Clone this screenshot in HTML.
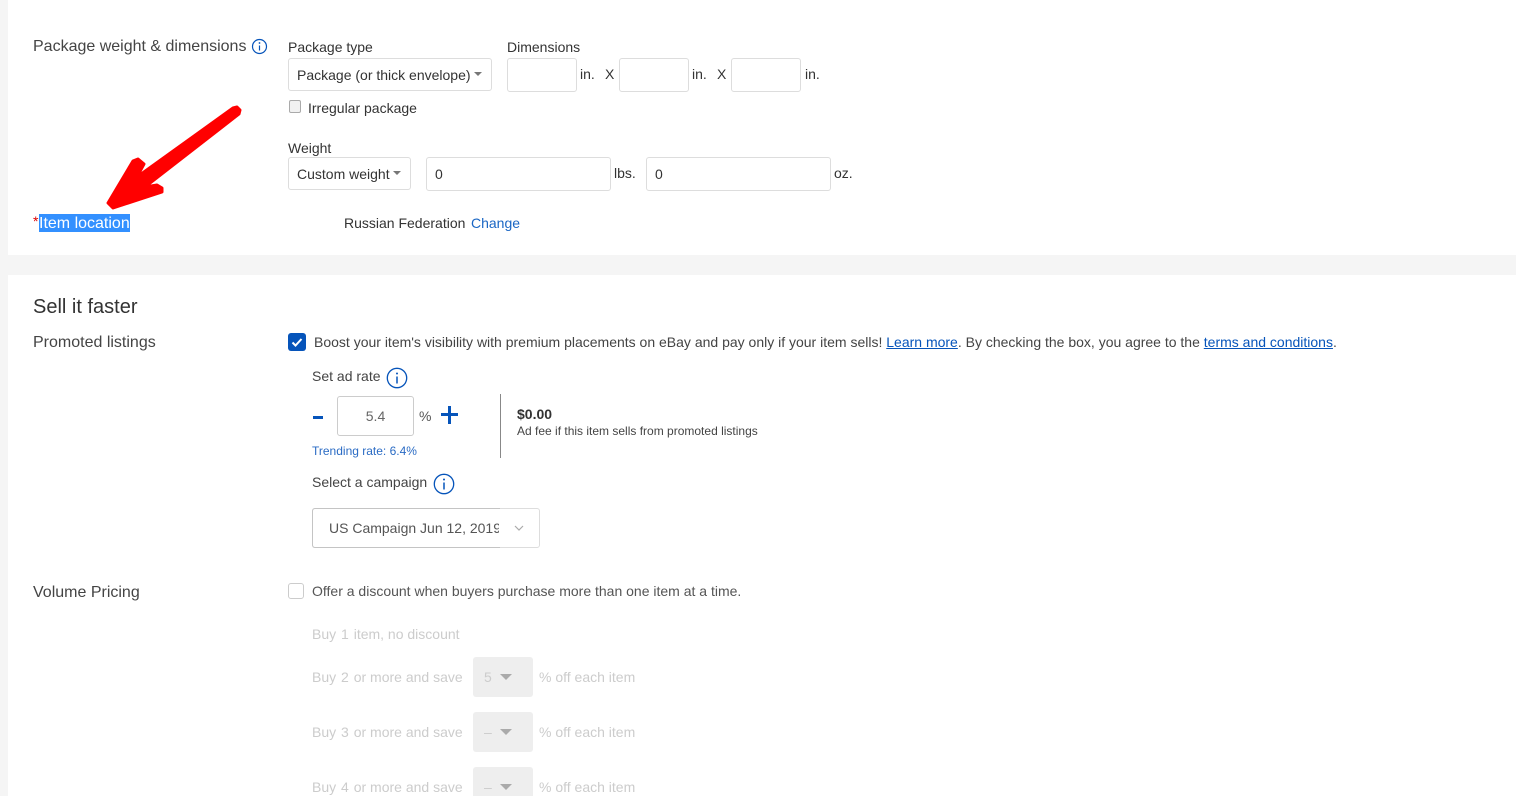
<!DOCTYPE html>
<html><head><meta charset="utf-8"><style>
html,body{margin:0;padding:0;overflow:hidden;width:1516px;height:796px}
#w{position:absolute;left:0;top:0;width:1516px;height:796px;overflow:hidden;background:#fff;font-family:"Liberation Sans",Arial,sans-serif;font-size:14px;color:#333}
.t{position:absolute;white-space:nowrap;line-height:20px}
.b{position:absolute;box-sizing:border-box;background:#fff;border:1px solid #ddd;border-radius:3px}
.g{position:absolute;background:#f5f5f5}
.h{font-size:16px;color:#444}
.d{color:#ccc}
.s{position:absolute;background:#eee;border-radius:3px;width:60px;height:40px;left:473px}
.c{position:absolute;width:0;height:0;border-left:4.5px solid transparent;border-right:4.5px solid transparent;border-top:4px solid #777}
.c2{position:absolute;width:0;height:0;border-left:6px solid transparent;border-right:6px solid transparent;border-top:6px solid #aaa}
.n{margin:0 1px}
a{color:#0654ba}
svg{position:absolute}
</style></head><body><div id="w">
<div class="g" style="left:0;top:0;width:8px;height:796px"></div>
<div class="g" style="left:0;top:255px;width:1516px;height:20px"></div>

<div class="t h" style="left:33px;top:37px">Package weight &amp; dimensions</div>
<svg style="left:251px;top:38px" width="17" height="17" viewBox="0 0 17 17"><circle cx="8.5" cy="8.5" r="7" fill="none" stroke="#0654ba" stroke-width="1.2"/><path d="M8.5 7.5v5" stroke="#0654ba" stroke-width="1.2"/><circle cx="8.5" cy="5" r=".9" fill="#0654ba"/></svg>

<div class="t" style="left:288px;top:37px">Package type</div>
<div class="b" style="left:288px;top:58px;width:204px;height:33px"></div>
<div class="t" style="left:297px;top:65px">Package (or thick envelope)</div>
<div class="c" style="left:474px;top:72px"></div>

<div class="t" style="left:507px;top:37px">Dimensions</div>
<div class="b" style="left:507px;top:58px;width:70px;height:34px"></div>
<div class="t" style="left:580px;top:64px">in.</div>
<div class="t" style="left:605px;top:64px">X</div>
<div class="b" style="left:619px;top:58px;width:70px;height:34px"></div>
<div class="t" style="left:692px;top:64px">in.</div>
<div class="t" style="left:717px;top:64px">X</div>
<div class="b" style="left:731px;top:58px;width:70px;height:34px"></div>
<div class="t" style="left:805px;top:64px">in.</div>

<div class="b" style="left:289px;top:100px;width:12px;height:13px;background:#f1f1f1;border-color:#aaa;border-radius:2px"></div>
<div class="t" style="left:308px;top:98px">Irregular package</div>

<div class="t" style="left:288px;top:138px">Weight</div>
<div class="b" style="left:288px;top:157px;width:123px;height:33px"></div>
<div class="t" style="left:297px;top:164px">Custom weight</div>
<div class="c" style="left:393px;top:171px"></div>
<div class="b" style="left:426px;top:157px;width:185px;height:34px"></div>
<div class="t" style="left:435px;top:164px">0</div>
<div class="t" style="left:614px;top:163px">lbs.</div>
<div class="b" style="left:646px;top:157px;width:185px;height:34px"></div>
<div class="t" style="left:655px;top:164px">0</div>
<div class="t" style="left:834px;top:163px">oz.</div>

<div class="t" style="left:33px;top:211px;color:#d00">*</div>
<div class="t" style="left:39px;top:214px;width:91px;height:18px;line-height:19px;background:#3390ff;color:#fff;font-size:16px">Item location</div>
<div class="t" style="left:344px;top:213px">Russian Federation</div>
<div class="t" style="left:471px;top:213px;color:#1a66c4">Change</div>

<svg style="left:0;top:0" width="300" height="230" viewBox="0 0 300 230">
<path d="M233 108L137 177L144 164L138 159L133 161L108 203L113 208L162 192L162 188L157 185L145 187L239 114L240 110L237 107Z" fill="#f00" stroke="#f00" stroke-width="3" stroke-linejoin="round"/>
</svg>

<div class="t" style="left:33px;top:296px;font-size:20px;line-height:23px;color:#333">Sell it faster</div>
<div class="t h" style="left:33px;top:333px">Promoted listings</div>

<div style="position:absolute;left:288px;top:333px;width:18px;height:18px;background:#0654ba;border-radius:3px"></div>
<svg style="left:288px;top:333px" width="18" height="18" viewBox="0 0 18 18"><path d="M4.5 9.5l3 3 6-6.5" fill="none" stroke="#fff" stroke-width="2"/></svg>
<div class="t" style="left:314px;top:332px;color:#444">Boost your item's visibility with premium placements on eBay and pay only if your item sells! <a style="text-decoration:underline">Learn more</a>. By checking the box, you agree to the <a style="text-decoration:underline">terms and conditions</a>.</div>

<div class="t" style="left:312px;top:366px;color:#444">Set ad rate</div>
<svg style="left:386px;top:367px" width="22" height="22" viewBox="0 0 22 22"><circle cx="11" cy="11" r="9.7" fill="none" stroke="#0654ba" stroke-width="1.3"/><path d="M11 9.5v7" stroke="#0654ba" stroke-width="1.5"/><circle cx="11" cy="6.5" r="1" fill="#0654ba"/></svg>

<div style="position:absolute;left:313px;top:416px;width:10px;height:3px;background:#0654ba"></div>
<div class="b" style="left:337px;top:396px;width:77px;height:40px;border-color:#ccc"></div>
<div class="t" style="left:337px;top:406px;width:77px;text-align:center;color:#666">5.4</div>
<div class="t" style="left:419px;top:406px;color:#555">%</div>
<div style="position:absolute;left:441px;top:413px;width:17px;height:3px;background:#0654ba"></div>
<div style="position:absolute;left:448px;top:406px;width:3px;height:18px;background:#0654ba"></div>
<div style="position:absolute;left:500px;top:394px;width:1px;height:64px;background:#888"></div>
<div class="t" style="left:517px;top:404px;font-weight:bold;color:#333">$0.00</div>
<div class="t" style="left:517px;top:421px;font-size:12px;color:#444">Ad fee if this item sells from promoted listings</div>
<div class="t" style="left:312px;top:441px;font-size:12px;color:#2a6bc4">Trending rate: 6.4%</div>

<div class="t" style="left:312px;top:472px;color:#444">Select a campaign</div>
<svg style="left:433px;top:473px" width="22" height="22" viewBox="0 0 22 22"><circle cx="11" cy="11" r="9.7" fill="none" stroke="#0654ba" stroke-width="1.3"/><path d="M11 9.5v7" stroke="#0654ba" stroke-width="1.5"/><circle cx="11" cy="6.5" r="1" fill="#0654ba"/></svg>

<div class="b" style="left:312px;top:508px;width:228px;height:40px;border-color:#ddd"></div>
<div style="position:absolute;left:312px;top:508px;width:188px;height:40px;box-sizing:border-box;border:1px solid #c4c4c4;border-right:0;border-radius:3px 0 0 3px"></div>
<div class="t" style="left:329px;top:518px;width:170px;overflow:hidden;color:#555">US Campaign Jun 12, 2019</div>
<svg style="left:514px;top:525px" width="10" height="7" viewBox="0 0 10 7"><path d="M1 1l4 4 4-4" fill="none" stroke="#aaa" stroke-width="1.2"/></svg>

<div class="t h" style="left:33px;top:583px">Volume Pricing</div>
<div class="b" style="left:288px;top:583px;width:16px;height:16px;border-color:#ccc"></div>
<div class="t" style="left:312px;top:581px;color:#555">Offer a discount when buyers purchase more than one item at a time.</div>

<div class="t d" style="left:312px;top:624px">Buy <span class="n">1</span> item, no discount</div>

<div class="t d" style="left:312px;top:667px">Buy <span class="n">2</span> or more and save</div>
<div class="s" style="top:657px"></div>
<div class="t d" style="left:484px;top:667px">5</div>
<div class="c2" style="left:500px;top:674px"></div>
<div class="t d" style="left:539px;top:667px">% off each item</div>

<div class="t d" style="left:312px;top:722px">Buy <span class="n">3</span> or more and save</div>
<div class="s" style="top:712px"></div>
<div class="t d" style="left:484px;top:722px">–</div>
<div class="c2" style="left:500px;top:729px"></div>
<div class="t d" style="left:539px;top:722px">% off each item</div>

<div class="t d" style="left:312px;top:777px">Buy <span class="n">4</span> or more and save</div>
<div class="s" style="top:767px"></div>
<div class="t d" style="left:484px;top:777px">–</div>
<div class="c2" style="left:500px;top:784px"></div>
<div class="t d" style="left:539px;top:777px">% off each item</div>
</div></body></html>
